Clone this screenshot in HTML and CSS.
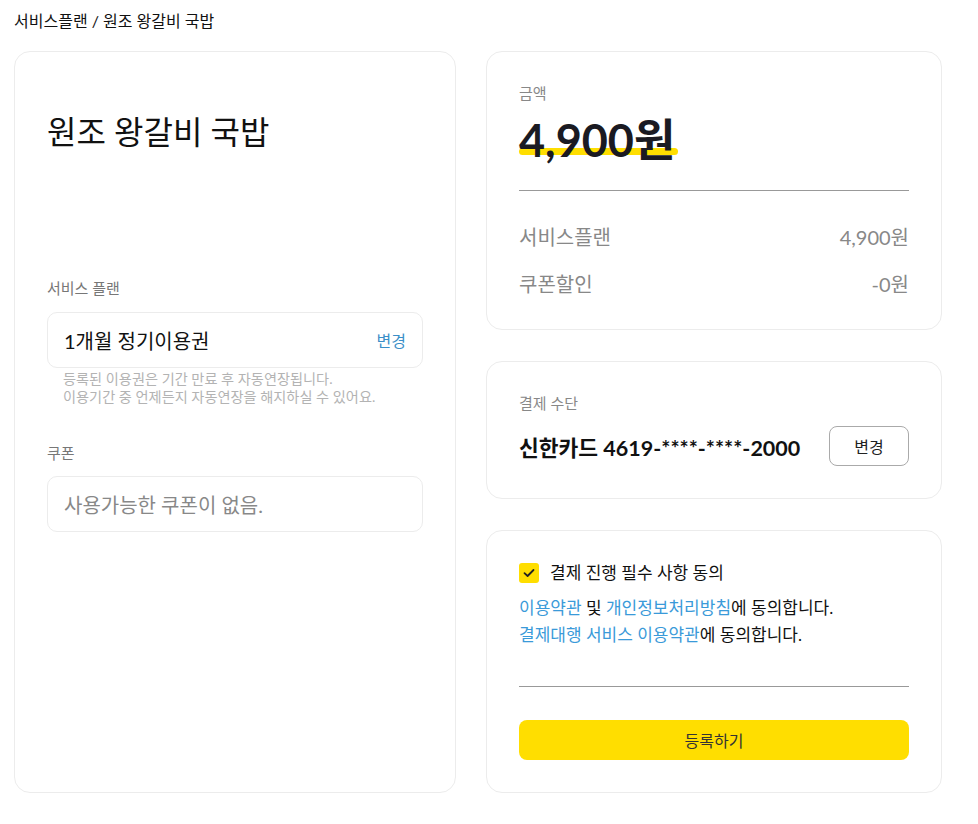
FILE: index.html
```html
<!DOCTYPE html>
<html lang="ko">
<head>
<meta charset="utf-8">
<link rel="stylesheet" href="styles.css">
</head>
<body>
<div class="page">
  <div class="crumb">서비스플랜 / 원조 왕갈비 국밥</div>
  <div class="grid">
    <section class="card left">
      <h1 class="title">원조 왕갈비 국밥</h1>
      <div class="label">서비스 플랜</div>
      <div class="box">
        <span class="box-text">1개월 정기이용권</span>
        <span class="link">변경</span>
      </div>
      <p class="hint">등록된 이용권은 기간 만료 후 자동연장됩니다.<br>이용기간 중 언제든지 자동연장을 해지하실 수 있어요.</p>
      <div class="label coupon-label">쿠폰</div>
      <div class="box">
        <span class="box-placeholder">사용가능한 쿠폰이 없음.</span>
      </div>
    </section>
    <div class="right">
      <section class="card">
        <div class="small-label">금액</div>
        <div class="amount"><span class="hl">4,900원</span></div>
        <hr class="divider">
        <div class="row"><span>서비스플랜</span><span>4,900원</span></div>
        <div class="row"><span>쿠폰할인</span><span>-0원</span></div>
      </section>
      <section class="card">
        <div class="small-label">결제 수단</div>
        <div class="pay-row">
          <span class="card-no">신한카드 4619-****-****-2000</span>
          <button class="btn-outline">변경</button>
        </div>
      </section>
      <section class="card">
        <div class="agree">
          <span class="check"><svg width="12" height="10" viewBox="0 0 12 10"><path d="M1.5 5.2 L4.6 8 L10.5 2" fill="none" stroke="#222" stroke-width="1.8" stroke-linecap="round" stroke-linejoin="round"/></svg></span>
          <span>결제 진행 필수 사항 동의</span>
        </div>
        <p class="terms"><span class="blue">이용약관</span> 및 <span class="blue">개인정보처리방침</span>에 동의합니다.<br><span class="blue">결제대행 서비스 이용약관</span>에 동의합니다.</p>
        <hr class="divider bottom-divider">
        <button class="btn-primary">등록하기</button>
      </section>
    </div>
  </div>
</div>
</body>
</html>
```

FILE: styles.css
```css
* { box-sizing: border-box; }
html, body { margin: 0; padding: 0; background: #fff; }
body {
  font-family: Lato, "Noto Sans CJK KR", sans-serif;
  color: #111;
}
.page { padding: 11px 14px 14px; }
.crumb { font-size: 16px; line-height: 20px; color: #111; margin-bottom: 20px; }
.grid {
  display: grid;
  grid-template-columns: 442px 456px;
  column-gap: 30px;
  align-items: start;
}
.card {
  border: 1px solid #ececec;
  border-radius: 16px;
  padding: 32px;
  background: #fff;
}
.left { padding: 60px 32px 32px; height: 742px; }
.title {
  margin: 0 0 126px;
  font-size: 32px;
  line-height: 40px;
  font-weight: 400;
  color: #111;
}
.label { font-size: 15px; line-height: 20px; color: #777; margin-bottom: 14px; }
.coupon-label { margin-top: 37px; margin-bottom: 13px; }
.box {
  height: 56px;
  border: 1px solid #ececec;
  border-radius: 10px;
  display: flex;
  align-items: center;
  justify-content: space-between;
  padding: 0 16px;
}
.box-text { font-size: 20px; color: #111; }
.box-placeholder { font-size: 20px; color: #888; }
.link { font-size: 16px; color: #3b8fc8; }
.hint {
  margin: 2px 0 0 16px;
  font-size: 14.2px;
  line-height: 18px;
  color: #b3b3b3;
}
.right { display: flex; flex-direction: column; gap: 31px; }
.small-label { font-size: 15px; line-height: 18px; color: #888; }
.amount {
  margin-top: 12px;
  font-size: 45px;
  line-height: 52px;
  font-weight: 700;
  color: #1a1a22;
}
.hl { position: relative; display: inline-block; z-index: 0; }
.hl::after {
  content: "";
  position: absolute;
  left: 0;
  right: -3px;
  bottom: 11px;
  height: 7px;
  border-radius: 4px;
  background: #ffde00;
  z-index: -1;
}
.divider { border: 0; border-top: 1px solid #999; margin: 24px 0 0; height: 0; }
.row {
  display: flex;
  justify-content: space-between;
  font-size: 20px;
  line-height: 26px;
  color: #888;
  font-weight: 400;
}
.divider + .row { margin-top: 33px; }
.row + .row { margin-top: 21px; }
.pay-row {
  margin-top: 14px;
  display: flex;
  align-items: center;
  justify-content: space-between;
}
.card-no { font-size: 21.5px; font-weight: 700; color: #111; }
.btn-outline {
  width: 80px;
  height: 40px;
  border: 1px solid #aaa;
  border-radius: 8px;
  background: #fff;
  font-family: inherit;
  font-size: 16px;
  color: #222;
}
.agree { display: flex; align-items: center; gap: 11px; font-size: 17px; line-height: 20px; color: #111; }
.check {
  width: 20px;
  height: 20px;
  border-radius: 3px;
  background: #ffde00;
  display: flex;
  align-items: center;
  justify-content: center;
}
.terms { margin: 11px 0 0; font-size: 17px; line-height: 27px; color: #111; }
.blue { color: #3a9ad9; }
.bottom-divider { margin-top: 38px; }
.btn-primary {
  display: block;
  width: 100%;
  height: 40px;
  margin-top: 33px;
  border: 0;
  border-radius: 8px;
  background: #ffde00;
  font-family: inherit;
  font-size: 16px;
  color: #333;
}
```
